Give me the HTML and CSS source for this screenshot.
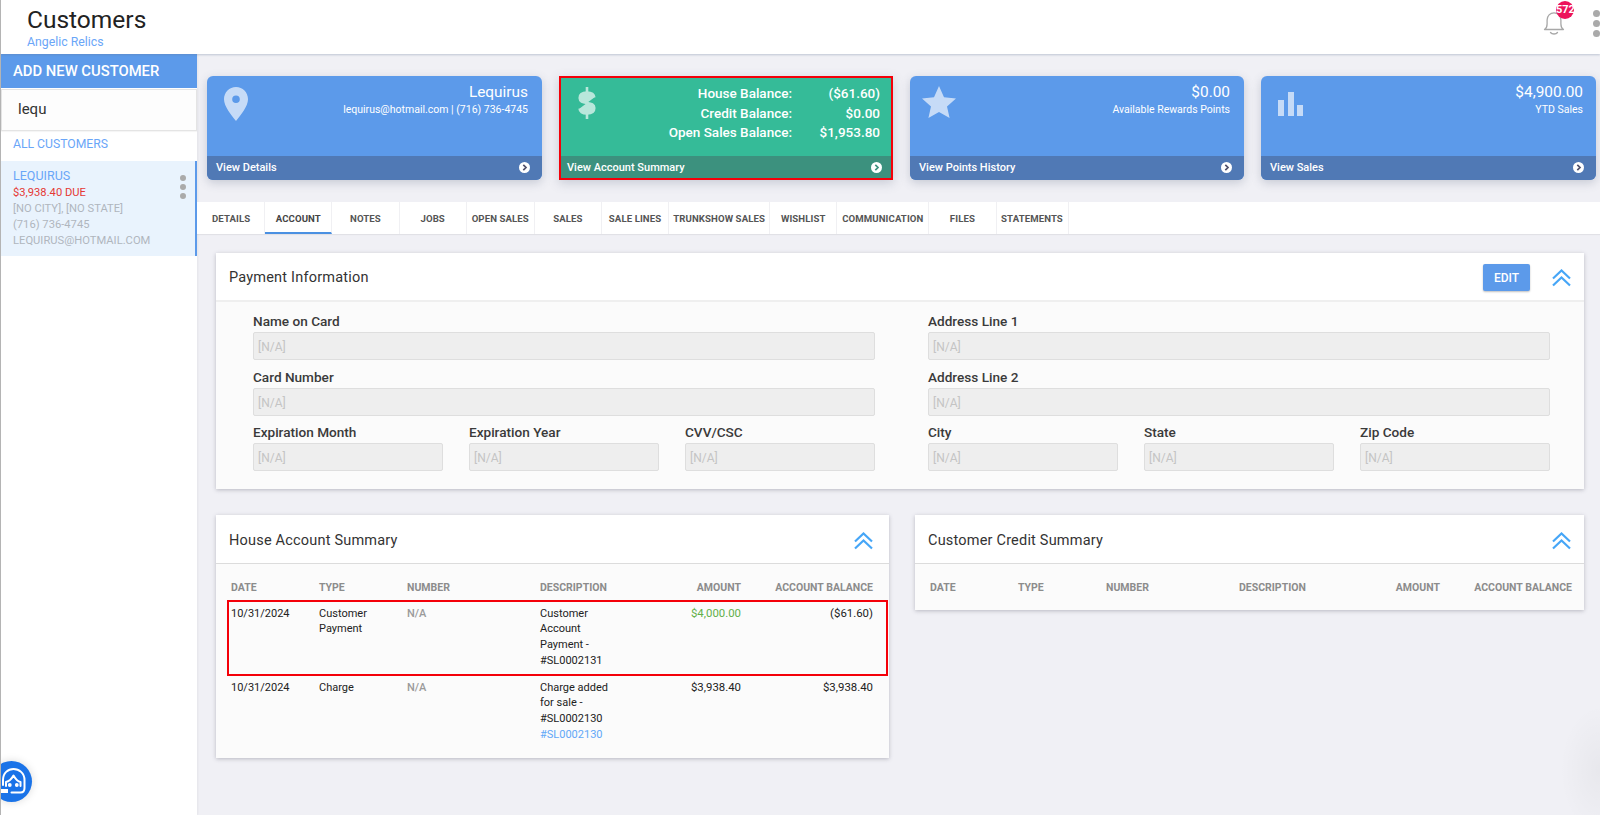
FILE: index.html
```html
<!DOCTYPE html>
<html lang="en">
<head>
<meta charset="utf-8">
<title>Customers</title>
<link rel="stylesheet" href="styles.css">
</head>
<body>
<div class="app">
  <header class="topbar">
    <div class="brand">
      <h1 class="title">Customers</h1>
      <div class="subtitle">Angelic Relics</div>
    </div>
    <div class="top-actions">
      <div class="bell">
        <svg width="22" height="26" viewBox="0 0 22 26" fill="none" stroke="#a8a8a8" stroke-width="1.3" stroke-linecap="round" stroke-linejoin="round"><path d="M1.500 19.500c2-1.200 2.600-2.800 2.600-5.500V10c0-4 3-7.200 6.900-7.200S17.900 6 17.900 10v4c0 2.700.6 4.300 2.600 5.500z"/><path d="M7.500 22.500c1.500 2 5.500 2 7 0"/></svg>
        <span class="badge">572</span>
      </div>
      <div class="dots dots-top"><i></i><i></i><i></i></div>
    </div>
  </header>
  <div class="main">
    <aside class="sidebar">
      <div class="add-btn">ADD NEW CUSTOMER</div>
      <div class="search">lequ</div>
      <div class="all-link">ALL CUSTOMERS</div>
      <div class="cust">
        <div class="cust-lines">
          <div class="cust-name">LEQUIRUS</div>
          <div class="cust-due">$3,938.40 DUE</div>
          <div>[NO CITY], [NO STATE]</div>
          <div>(716) 736-4745</div>
          <div>LEQUIRUS@HOTMAIL.COM</div>
        </div>
        <div class="dots dots-side"><i></i><i></i><i></i></div>
      </div>
    </aside>
    <main class="content">
      <section class="cards">
        <article class="card">
          <div class="card-body">
            <svg class="card-icon" width="24" height="34" viewBox="0 0 24 34"><path fill-rule="evenodd" d="M12 0C5.300 0 0 5.400 0 12.200 0 19.500 7.500 28 12 34c4.500-6 12-14.500 12-21.800C24 5.400 18.700 0 12 0zm0 8.400a3.800 3.800 0 1 1 0 7.600 3.800 3.800 0 0 1 0-7.600z"/></svg>
            <div class="card-text">
              <div class="card-big">Lequirus</div>
              <div class="card-small">lequirus@hotmail.com | (716) 736-4745</div>
            </div>
          </div>
          <div class="card-foot"><span>View Details</span><svg class="go" width="11" height="11" viewBox="0 0 11 11"><circle cx="5.500" cy="5.500" r="5.500" fill="#fff"/><path d="M4.300 2.800l2.700 2.700-2.700 2.700" fill="none" stroke="#50506a" stroke-width="1.700"/></svg></div>
        </article>
        <article class="card card-green">
          <div class="card-body">
            <svg class="card-icon icon-dollar" width="20" height="32" viewBox="0 0 20 32" fill="none" stroke="#fff" stroke-width="2.600"><path d="M17.300 10.500C17 7.500 14.500 5.600 10 5.600 5.500 5.600 2.700 7.700 2.700 11c0 3.500 2.800 4.200 7.300 5 4.500.8 7.300 1.500 7.300 5 0 3.300-2.800 5.400-7.300 5.400-4.500 0-7.100-1.900-7.400-4.900"/><path d="M10 0v5.600M10 26.400V32"/></svg>
            <div class="balances">
              <span>House Balance:</span><span>($61.60)</span>
              <span>Credit Balance:</span><span>$0.00</span>
              <span>Open Sales Balance:</span><span>$1,953.80</span>
            </div>
          </div>
          <div class="card-foot"><span>View Account Summary</span><svg class="go" width="11" height="11" viewBox="0 0 11 11"><circle cx="5.500" cy="5.500" r="5.500" fill="#fff"/><path d="M4.300 2.800l2.700 2.700-2.700 2.700" fill="none" stroke="#3c917e" stroke-width="1.700"/></svg></div>
        </article>
        <article class="card">
          <div class="card-body">
            <svg class="card-icon icon-star" width="34" height="32" viewBox="0 0 34 32"><path d="M17 0l5 11.300 12 1.200-9 8.100 2.600 11.400L17 26l-10.600 6L9 20.600l-9-8.100 12-1.200z"/></svg>
            <div class="card-text">
              <div class="card-big">$0.00</div>
              <div class="card-small">Available Rewards Points</div>
            </div>
          </div>
          <div class="card-foot"><span>View Points History</span><svg class="go" width="11" height="11" viewBox="0 0 11 11"><circle cx="5.500" cy="5.500" r="5.500" fill="#fff"/><path d="M4.300 2.800l2.700 2.700-2.700 2.700" fill="none" stroke="#50506a" stroke-width="1.700"/></svg></div>
        </article>
        <article class="card">
          <div class="card-body card-body-last">
            <svg class="card-icon icon-bars" width="25" height="24" viewBox="0 0 25 24"><rect x="0" y="8" width="6" height="16"/><rect x="10" y="0" width="6" height="24"/><rect x="19" y="13" width="6" height="11"/></svg>
            <div class="card-text">
              <div class="card-big">$4,900.00</div>
              <div class="card-small">YTD Sales</div>
            </div>
          </div>
          <div class="card-foot"><span>View Sales</span><svg class="go" width="11" height="11" viewBox="0 0 11 11"><circle cx="5.500" cy="5.500" r="5.500" fill="#fff"/><path d="M4.300 2.800l2.700 2.700-2.700 2.700" fill="none" stroke="#50506a" stroke-width="1.700"/></svg></div>
        </article>
      </section>

      <nav class="tabs">
        <a class="tab t67">DETAILS</a>
        <a class="tab t67 active">ACCOUNT</a>
        <a class="tab t67">NOTES</a>
        <a class="tab t67">JOBS</a>
        <a class="tab t68">OPEN SALES</a>
        <a class="tab t67">SALES</a>
        <a class="tab t67">SALE LINES</a>
        <a class="tab t101">TRUNKSHOW SALES</a>
        <a class="tab t67">WISHLIST</a>
        <a class="tab t92">COMMUNICATION</a>
        <a class="tab t67">FILES</a>
        <a class="tab t72">STATEMENTS</a>
      </nav>

      <div class="panels">
        <section class="panel">
          <div class="panel-head">
            <h2 class="panel-title">Payment Information</h2>
            <button class="edit">EDIT</button>
            <svg class="chev" width="19" height="18" viewBox="0 0 19 18" fill="none" stroke="#46a6f7" stroke-width="2.200"><path d="M1 9.500l8.500-8 8.500 8M1 16.500l8.500-8 8.500 8"/></svg>
          </div>
          <div class="form">
            <div class="form-col">
              <div class="field"><label>Name on Card</label><div class="input">[N/A]</div></div>
              <div class="field"><label>Card Number</label><div class="input">[N/A]</div></div>
              <div class="triple">
                <div class="field"><label>Expiration Month</label><div class="input">[N/A]</div></div>
                <div class="field"><label>Expiration Year</label><div class="input">[N/A]</div></div>
                <div class="field"><label>CVV/CSC</label><div class="input">[N/A]</div></div>
              </div>
            </div>
            <div class="form-col">
              <div class="field"><label>Address Line 1</label><div class="input">[N/A]</div></div>
              <div class="field"><label>Address Line 2</label><div class="input">[N/A]</div></div>
              <div class="triple">
                <div class="field"><label>City</label><div class="input">[N/A]</div></div>
                <div class="field"><label>State</label><div class="input">[N/A]</div></div>
                <div class="field"><label>Zip Code</label><div class="input">[N/A]</div></div>
              </div>
            </div>
          </div>
        </section>

        <div class="lower">
          <section class="panel">
            <div class="panel-head panel-head-tall panel-head-house">
              <h2 class="panel-title">House Account Summary</h2>
              <svg class="chev" width="19" height="18" viewBox="0 0 19 18" fill="none" stroke="#46a6f7" stroke-width="2.200"><path d="M1 9.500l8.500-8 8.500 8M1 16.500l8.500-8 8.500 8"/></svg>
            </div>
            <div class="ledger ledger-full">
              <div class="row row-head"><span>DATE</span><span>TYPE</span><span>NUMBER</span><span>DESCRIPTION</span><span class="num">AMOUNT</span><span class="num">ACCOUNT BALANCE</span></div>
              <div class="row row-mark"><span>10/31/2024</span><span>Customer Payment</span><span class="na">N/A</span><span>Customer Account Payment - #SL0002131</span><span class="num pos">$4,000.00</span><span class="num">($61.60)</span></div>
              <div class="row"><span>10/31/2024</span><span>Charge</span><span class="na">N/A</span><span>Charge added for sale - #SL0002130 <a class="sl">#SL0002130</a></span><span class="num">$3,938.40</span><span class="num">$3,938.40</span></div>
            </div>
          </section>
          <section class="panel panel-short">
            <div class="panel-head panel-head-tall">
              <h2 class="panel-title">Customer Credit Summary</h2>
              <svg class="chev" width="19" height="18" viewBox="0 0 19 18" fill="none" stroke="#46a6f7" stroke-width="2.200"><path d="M1 9.500l8.500-8 8.500 8M1 16.500l8.500-8 8.500 8"/></svg>
            </div>
            <div class="ledger">
              <div class="row row-head"><span>DATE</span><span>TYPE</span><span>NUMBER</span><span>DESCRIPTION</span><span class="num">AMOUNT</span><span class="num">ACCOUNT BALANCE</span></div>
            </div>
          </section>
        </div>
      </div>
    </main>
  </div>
  <div class="help">
    <svg width="28" height="28" viewBox="0 0 28 28" fill="none" stroke="#fff" stroke-width="2" stroke-linecap="round" stroke-linejoin="round"><path d="M5 17V12C5 5 10 1 15.500 1S26.500 5 26.500 12v8c0 3-1.500 4.500-4 4.500h-9"/><path d="M8 18v-4c2.500-.5 5.500-3 7.500-6.500 2 3.500 4.500 6 7 6.500v4"/><circle cx="11.800" cy="17" r=".9" fill="#fff"/><circle cx="18.800" cy="17" r=".9" fill="#fff"/><rect x="3" y="21" width="7" height="4" fill="#fff" stroke="none"/></svg>
  </div>
</div>
</body>
</html>
```
FILE: styles.css
```css
* { box-sizing: border-box; }
html, body { margin: 0; height: 100%; overflow: hidden; }
body { font-family: Roboto, "Liberation Sans", sans-serif; background: #f0f0f5; color: #222; }
.app { position: relative; height: 815px; width: 1600px; overflow: hidden; display: flex; flex-direction: column; border-left: 1px solid #b4b4b4; }
.app::after { content: ""; position: absolute; right: -40px; bottom: -20px; width: 80px; height: 130px; background: radial-gradient(closest-side, rgba(0,0,0,.035), rgba(0,0,0,0)); pointer-events: none; }
.topbar { height: 54px; flex: none; background: #fff; display: flex; justify-content: space-between; align-items: flex-start; padding-left: 26px; box-shadow: 0 1px 2px rgba(100,120,150,.35); position: relative; z-index: 2; }
.title { margin: 6px 0 0; font-size: 24.500px; line-height: 27px; font-weight: 400; color: #222; }
.subtitle { font-size: 12.300px; line-height: 16px; margin-top: 1px; color: #6aa6f8; }
.top-actions { display: flex; align-items: flex-start; }
.bell { position: relative; width: 22px; height: 26px; margin-top: 10px; margin-right: 28px; }
.bell svg { display: block; }
.badge { position: absolute; left: 13px; top: -9px; width: 18px; height: 18px; border-radius: 50%; background: #ec135a; color: #fff; font-size: 11px; font-weight: 700; line-height: 18px; text-align: center; white-space: nowrap; }
.dots { display: flex; flex-direction: column; }
.dots i { display: block; border-radius: 50%; background: #aaa; }
.dots-top { gap: 3px; margin-top: 10px; margin-right: 0; }
.dots-top i { width: 7px; height: 7px; }
.main { flex: 1; display: flex; min-height: 0; }
.sidebar { width: 196px; flex: none; background: #fff; box-shadow: 1px 0 2px rgba(0,0,0,.05); }
.add-btn { height: 34px; background: #5c9aea; color: #fff; font-size: 14.800px; font-weight: 500; line-height: 34px; padding-left: 12px; }
.search { height: 42px; margin-top: 1px; border: 1px solid #e4e4e4; background: #fdfdfd; font-size: 15px; line-height: 39px; padding-left: 16px; color: #333; box-shadow: 0 1px 1px rgba(0,0,0,.04); }
.all-link { height: 30px; font-size: 12.200px; line-height: 27px; padding-left: 12px; color: #6aa6f8; }
.cust { height: 95px; background: #e9f3fd; border-right: 2px solid #5c9aea; padding: 6px 6px 0 12px; display: flex; justify-content: space-between; font-size: 11.200px; line-height: 16px; color: #b0b6bd; }
.cust-name { color: #6aa6f8; font-size: 12.500px; line-height: 18px; }
.cust-due { color: #e53935; }
.dots-side { gap: 3px; margin-top: 8px; margin-right: 3px; }
.dots-side i { width: 6px; height: 6px; }
.content { flex: 1; min-width: 0; padding: 22px 0 0; }
.cards { display: grid; grid-template-columns: 335px 334px 334px 335px; column-gap: 17px; padding: 0 4px 0 10px; }
.card { height: 104px; border-radius: 6px; background: #5c9aea; color: #fff; overflow: hidden; display: flex; flex-direction: column; box-shadow: 0 3px 10px rgba(80,90,120,.25); }
.card-body { flex: 1; display: flex; justify-content: space-between; align-items: flex-start; padding: 6px 14px 0 17px; }
.card-body-last { padding-right: 13px; }
.card-icon { fill: #fff; opacity: .65; margin-top: 5px; flex: none; }
.icon-star { margin-left: -5px; margin-top: 4px; }
.icon-bars { margin-top: 10px; }
.card-text { text-align: right; }
.card-big { font-size: 15.400px; line-height: 21px; }
.card-small { font-size: 10.500px; line-height: 14px; }
.card-foot { height: 24px; flex: none; background: #5079b5; display: flex; justify-content: space-between; align-items: center; padding: 0 12px 1px 9px; font-size: 11px; font-weight: 500; }
.go { flex: none; }
.card-green { background: #35bb98; border-radius: 0; outline: 2px solid #f40009; outline-offset: -2px; }
.card-green .card-foot { background: #3c917e; padding-left: 8px; padding-right: 11px; }
.card-green .card-body { padding-left: 18px; padding-right: 13px; padding-top: 8px; }
.card-green .card-icon { margin-top: 3px; }
.balances { display: grid; grid-template-columns: auto 88px; column-gap: 0; text-align: right; font-size: 13.500px; font-weight: 500; line-height: 19.500px; }
.tabs { display: flex; height: 32px; margin-top: 22px; padding-left: 1px; background: #fff; box-shadow: 0 1px 1px rgba(0,0,0,.06); }
.tab { border-right: 1px solid #f0f0f3; font-size: 9.600px; font-weight: 700; line-height: 34px; letter-spacing: .1px; text-align: center; color: #555; white-space: nowrap; }
.t67 { width: 67.200px; }
.t68 { width: 68px; }
.t72 { width: 72px; }
.t92 { width: 92px; }
.t101 { width: 101px; }
.tab.active { border-bottom: 2px solid #4a90e2; color: #444; }
.panels { padding: 19px 16px 0 19px; }
.panel { background: #fbfbfb; box-shadow: 0 1px 4px rgba(60,60,80,.3); }
.panel-head { height: 49px; background: #fff; border-bottom: 2px solid #efefef; display: flex; align-items: center; padding: 2px 13px 0 13px; }
.panel-head-tall { border-bottom: 1px solid #dcdcdc; padding-top: 4px; }
.panel-head-house { padding-right: 16px; }
.panel-title { flex: 1; margin: 0; font-size: 14.500px; font-weight: 400; color: #333; letter-spacing: .2px; }
.edit { width: 47px; height: 27px; border: 0; border-radius: 2px; background: #5c9aea; color: #fff; font: 500 12px Roboto, sans-serif; margin-right: 22px; box-shadow: 0 1px 2px rgba(0,0,0,.25); }
.chev { flex: none; }
.form { display: grid; grid-template-columns: 622px 622px; column-gap: 53px; padding: 10px 34px 10px 37px; }
.form-col { display: flex; flex-direction: column; }
.field { display: flex; flex-direction: column; margin-bottom: 7.500px; }
.field label { font-size: 13.600px; font-weight: 500; line-height: 19px; height: 20px; color: #3a3a3a; }
.input { height: 28px; background: #eeeeee; border: 1px solid #dedede; border-radius: 2px; font-size: 12px; line-height: 28px; padding-left: 4px; color: #c4c4c4; }
.triple { display: grid; grid-template-columns: 190px 190px 190px; justify-content: space-between; }
.lower { display: grid; grid-template-columns: 673px 669px; column-gap: 26px; align-items: start; margin-top: 26px; }
.panel-short .ledger { padding-bottom: 10px; }
.ledger { padding-top: 13px; }
.ledger-full { padding-bottom: 9px; }
.row { display: grid; grid-template-columns: 88px 88px 133px 80px 121px 132px; padding: 4px 15px 6px 15px; font-size: 11px; line-height: 15.800px; color: #222; }
.row-head { padding: 2px 15px 4px 15px; font-weight: 700; font-size: 10.500px; color: #8c8c8c; line-height: 17px; white-space: nowrap; }
.row-mark { margin: 0 1px 0 11px; padding: 6px 14px 6px 4px; height: 76px; outline: 2px solid #f40009; outline-offset: -2px; }
.num { text-align: right; font-size: 11.400px; }
.row-head .num { font-size: 10.500px; }
.na { font-weight: 500; color: #9a9a9a; }
.pos { color: #62b04a; }
.sl { color: #62a8f8; }
.help { position: absolute; left: -10px; top: 761px; width: 41px; height: 41px; border-radius: 50%; background: #1a73e8; display: flex; align-items: center; justify-content: center; box-shadow: 0 0 8px rgba(0,0,0,.15); }
```
